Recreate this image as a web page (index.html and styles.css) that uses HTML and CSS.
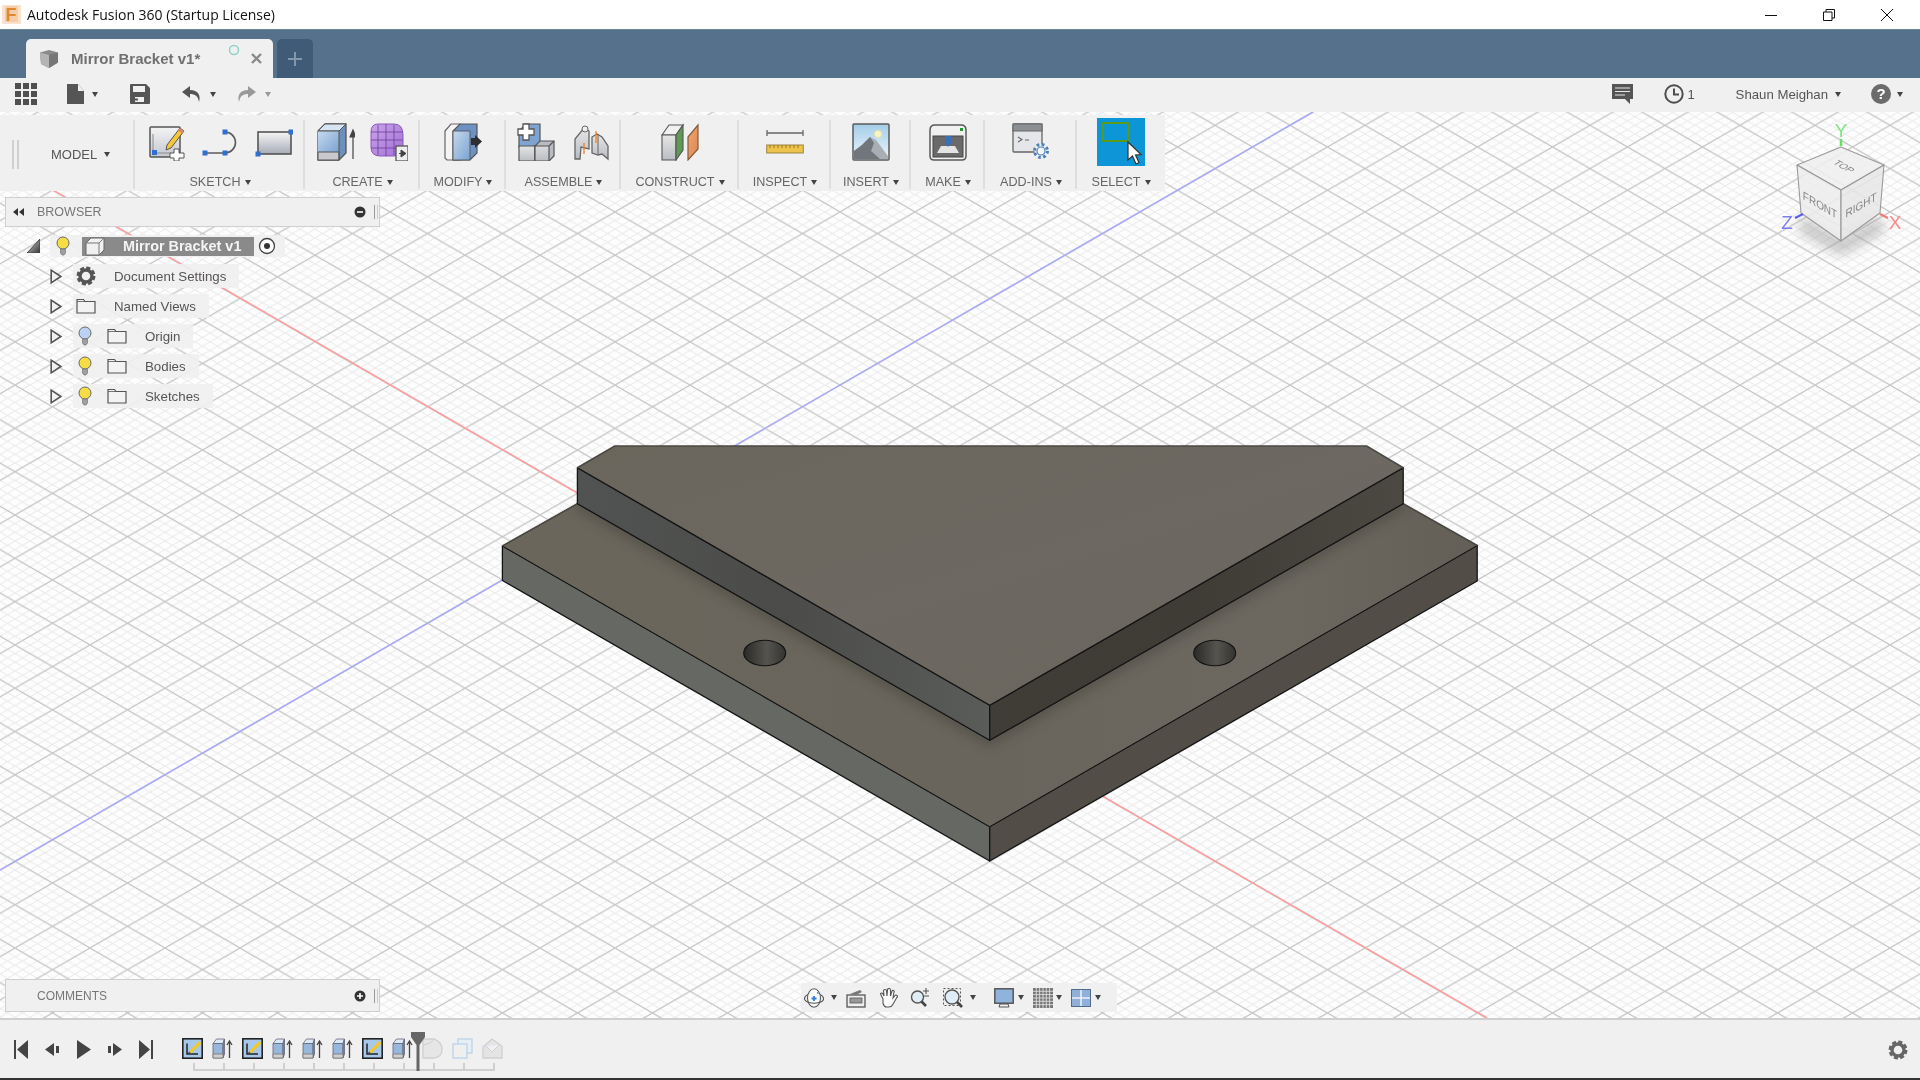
FILE: index.html
```html
<!DOCTYPE html>
<html lang="en">
<head>
<meta charset="utf-8">
<title>Autodesk Fusion 360 (Startup License)</title>
<link rel="stylesheet" href="styles.css">
</head>
<body>
<div class="app">
  <header class="titlebar">
    <svg class="app-logo" width="19" height="19" viewBox="0 0 19 19"><rect width="19" height="19" fill="#f9e3ce"/><rect x="3" y="1" width="13" height="16" rx="1" fill="#f5cda6"/><text x="3.500" y="15.500" class="logo-letter">F</text></svg>
    <span class="title-text">Autodesk Fusion 360 (Startup License)</span>
    <div class="win-controls">
      <span class="win-btn"><svg width="12" height="12" viewBox="0 0 12 12"><path d="M0 6.500H12" stroke="#111"/></svg></span>
      <span class="win-btn"><svg width="12" height="12" viewBox="0 0 12 12"><path d="M.5 3h8.500v8.500H.5zM3 3V.5h8.500V9H9" fill="none" stroke="#111"/></svg></span>
      <span class="win-btn"><svg width="12" height="12" viewBox="0 0 12 12"><path d="M0 0L12 12M12 0L0 12" stroke="#111"/></svg></span>
    </div>
  </header>

  <nav class="tabbar">
    <div class="tab">
      <svg width="20" height="20" viewBox="0 0 20 20"><path d="M1 3.500L10 1l9 2.500v10L10 19l-8-4z" fill="#8a8a8a"/><path d="M1 3.500L10 6v13l-8-4z" fill="#b4b4b4"/><path d="M10 6l9-2.500v10L10 19z" fill="#777"/></svg>
      <span class="tab-title">Mirror Bracket v1*</span>
      <svg class="tab-status" width="12" height="12" viewBox="0 0 12 12"><circle cx="6" cy="6" r="4.500" fill="none" stroke="#8fd3c6" stroke-width="1.500"/></svg>
      <svg class="tab-close" width="11" height="11" viewBox="0 0 11 11"><path d="M1 1L10 10M10 1L1 10" stroke="#8a8a8a" stroke-width="2.400"/></svg>
    </div>
    <div class="tab-new"><svg width="14" height="14" viewBox="0 0 14 14"><path d="M7 0V14M0 7H14" stroke="#8397ab" stroke-width="2"/></svg></div>
  </nav>

  <div class="quickbar">
    <svg width="22" height="22" viewBox="0 0 22 22" fill="#4f4f4f"><path d="M0 0h6v6H0zM8 0h6v6H8zM16 0h6v6h-6zM0 8h6v6H0zM8 8h6v6H8zM16 8h6v6h-6zM0 16h6v6H0zM8 16h6v6H8zM16 16h6v6h-6z"/></svg>
    <svg class="m30" width="18" height="20" viewBox="0 0 18 20"><path d="M0 0h11l6 7v13H0z" fill="#555"/><path d="M11 0v7h6" fill="#f0f0f0"/></svg>
    <i class="caret m7"></i>
    <svg class="m32" width="20" height="20" viewBox="0 0 20 20"><path d="M1 0h15l4 4v15a1 1 0 0 1-1 1H1a1 1 0 0 1-1-1V1a1 1 0 0 1 1-1z" fill="#555"/><rect x="3" y="2" width="12" height="6" fill="#f0f0f0"/><rect x="5" y="13" width="9" height="5" fill="#f0f0f0"/><rect x="5" y="14.500" width="3" height="2" fill="#555"/></svg>
    <svg class="m32" width="20" height="16" viewBox="0 0 20 16"><path d="M8 0L0 6l8 6V8c5 0 8 2 9 8 2-7-1-12-9-12z" fill="#555"/></svg>
    <i class="caret m8"></i>
    <svg class="m20" width="20" height="16" viewBox="0 0 20 16"><path d="M12 0l8 6-8 6V8c-5 0-8 2-9 8C1 9 4 4 12 4z" fill="#999"/></svg>
    <i class="caret caret-light m9"></i>
    <div class="qb-right">
      <svg width="21" height="20" viewBox="0 0 21 20"><path d="M0 0h21v15h-3v5l-5-5H0z" fill="#555"/><path d="M3 4h15M3 7.500h15M3 11h10" stroke="#e8e8e8" stroke-width="1.200"/></svg>
      <svg class="m31" width="20" height="20" viewBox="0 0 20 20"><circle cx="10" cy="10" r="8.700" fill="none" stroke="#4d4d4d" stroke-width="2"/><path d="M10 4.500V10.500H15" fill="none" stroke="#4d4d4d" stroke-width="2"/></svg>
      <span class="qb-text m3 qb-count">1</span>
      <span class="qb-text user">Shaun Meighan</span>
      <i class="caret m7"></i>
      <svg class="m30" width="20" height="20" viewBox="0 0 20 20"><circle cx="10" cy="10" r="10" fill="#6b6b6b"/><text x="10" y="15" class="help-mark">?</text></svg>
      <i class="caret m6"></i>
    </div>
  </div>

  <main class="viewport">
    <svg class="scene" width="1920" height="906" viewBox="0 112 1920 906">
      <defs>
        <pattern id="grid-minor" patternUnits="userSpaceOnUse" x="615" y="515" width="15" height="8.660">
          <path d="M0 0L15 8.660M0 8.660L15 0" stroke="#e9e9e9" stroke-width="1" fill="none"/>
        </pattern>
        <pattern id="grid-major" patternUnits="userSpaceOnUse" x="615" y="515" width="75" height="43.300">
          <path d="M0 0L75 43.300M0 43.300L75 0" stroke="#c6c6c6" stroke-width="1.100" fill="none"/>
        </pattern>
        <linearGradient id="f-top" x1="0" y1="0" x2="1" y2="1"><stop offset="0" stop-color="#6a665c"/><stop offset=".5" stop-color="#6d6962"/><stop offset="1" stop-color="#69655c"/></linearGradient>
        <linearGradient id="f-base" x1="0" y1="0" x2="1" y2="0"><stop offset="0" stop-color="#6a665c"/><stop offset=".5" stop-color="#69655c"/><stop offset=".8" stop-color="#6c6860"/><stop offset="1" stop-color="#645f56"/></linearGradient>
        <linearGradient id="f-step-l" x1="0" y1="0" x2="1" y2="0"><stop offset="0" stop-color="#515352"/><stop offset=".5" stop-color="#4b4c4a"/><stop offset="1" stop-color="#5a5c5a"/></linearGradient>
        <linearGradient id="f-step-r" x1="0" y1="0" x2="1" y2="0"><stop offset="0" stop-color="#403d37"/><stop offset=".5" stop-color="#3f3c36"/><stop offset="1" stop-color="#4c4942"/></linearGradient>
        <linearGradient id="f-hole" x1="0" y1="0" x2="1" y2="0"><stop offset="0" stop-color="#2a2a28"/><stop offset=".55" stop-color="#55544f"/><stop offset="1" stop-color="#333331"/></linearGradient>
        <linearGradient id="i-paper" x1="0" y1="0" x2="0" y2="1"><stop offset="0" stop-color="#f4f4f4"/><stop offset="1" stop-color="#c3c7cf"/></linearGradient>
        <linearGradient id="i-rect" x1="0" y1="0" x2="0" y2="1"><stop offset="0" stop-color="#f6f6f6"/><stop offset="1" stop-color="#a6abb8"/></linearGradient>
        <linearGradient id="i-blue" x1="0" y1="0" x2="1" y2="1"><stop offset="0" stop-color="#c6d9ee"/><stop offset="1" stop-color="#7ba3d2"/></linearGradient>
        <linearGradient id="i-grey" x1="0" y1="0" x2="0" y2="1"><stop offset="0" stop-color="#e6e6e6"/><stop offset="1" stop-color="#b9bcc2"/></linearGradient>
        <linearGradient id="i-purple" x1="0" y1="0" x2="1" y2="1"><stop offset="0" stop-color="#c9a4ea"/><stop offset="1" stop-color="#a271d6"/></linearGradient>
        <linearGradient id="i-sky" x1="0" y1="0" x2="0" y2="1"><stop offset="0" stop-color="#a3cde8"/><stop offset="1" stop-color="#eef6fb"/></linearGradient>
        <linearGradient id="i-orange" x1="0" y1="0" x2="1" y2="1"><stop offset="0" stop-color="#f0a873"/><stop offset="1" stop-color="#dc8450"/></linearGradient>
        <linearGradient id="root-tri" x1="0" y1="0" x2="1" y2="1"><stop offset="0" stop-color="#ddd"/><stop offset="1" stop-color="#333"/></linearGradient>
        <filter id="soft"><feGaussianBlur stdDeviation="6"/></filter>
        <filter id="soft-cube"><feGaussianBlur stdDeviation="6"/></filter>
        <clipPath id="base-clip"><polygon points="501.700,545 576.700,502.700 989,739.300 1402.500,502.700 1476.500,544.500 989,825.700"/></clipPath>

        <symbol id="bulb" viewBox="0 0 16 20"><circle cx="8" cy="7" r="6" fill="currentColor" stroke="#6a6a6a"/><path d="M5.500 13h5v4l-1.500 2h-2l-1.500-2z" fill="#a0a0a0" stroke="#777" stroke-width=".7"/></symbol>
        <symbol id="folder" viewBox="0 0 20 16"><path d="M1 15V1.500h6.500L9 3.500h10V15z" fill="#f3f3f3" stroke="#555" stroke-width="1.200"/><path d="M1 3.500h8" stroke="#555" stroke-width=".8"/></symbol>
        <symbol id="twist" viewBox="0 0 12 15"><path d="M1.200 1.200L10.800 7.500 1.200 13.800z" fill="#f2f2f2" stroke="#555" stroke-width="1.600"/></symbol>
        <symbol id="tl-sketch" viewBox="0 0 21 21"><rect x=".8" y=".8" width="19.400" height="19.400" fill="#a7c8ea" stroke="#222" stroke-width="1.600"/><path d="M5 5.500V16H16" fill="none" stroke="#222" stroke-width="1.500"/><path d="M7 13.500L17 3l2.500 2.200L9 15.500z" fill="#f4c924"/><path d="M7 13.500L9 15.500 5.500 16.500z" fill="#444"/></symbol>
        <symbol id="tl-extrude" viewBox="0 0 21 21"><path d="M1 5.500L4.500 1h8l-1.500 4.500z" fill="#dbe8f5" stroke="#667" stroke-width=".8"/><path d="M1 5.500h10V20H1z" fill="#97b7dc" stroke="#667" stroke-width=".8"/><path d="M11 5.500L12.500 1v15L11 20z" fill="#6f8fb8" stroke="#667" stroke-width=".8"/><path d="M1 16h10v4H1z" fill="#cfcfcf" stroke="#777" stroke-width=".8"/><path d="M17.500 20V4M15 7l2.500-4L20 7" fill="none" stroke="#444" stroke-width="1.300"/></symbol>
      </defs>

      <rect x="0" y="112" width="1920" height="906" fill="#fdfdfd"/>
      <rect x="0" y="112" width="1920" height="906" fill="url(#grid-minor)"/>
      <rect x="0" y="112" width="1920" height="906" fill="url(#grid-major)"/>
      <path d="M0 159.500L1487 1018" stroke="#ff9c9c" stroke-width="1.500"/>
      <path d="M0 870L1313 112" stroke="#a9a9fb" stroke-width="1.500"/>

      <!-- model -->
      <g class="model">
        <g stroke="#141414" stroke-width="1.300" stroke-linejoin="round">
          <polygon points="501.700,545 989,825.700 989,860 501.700,579.500" fill="#666864"/>
          <polygon points="1476.500,544.500 989,825.700 989,860 1476.500,580" fill="#524e47"/>
          <polygon points="501.700,545 576.700,502.700 989,739.300 1402.500,502.700 1476.500,544.500 989,825.700" fill="url(#f-base)" stroke-width="1"/>
        </g>
        <g clip-path="url(#base-clip)"><path d="M576.700 502.700L989 739.300 1402.500 502.700" fill="none" stroke="#3c3a34" stroke-width="10" filter="url(#soft)" opacity=".5"/></g>
        <path d="M501.700 545L576.700 502.700M1402.500 502.700L1476.500 544.500" stroke="#4c4a44" stroke-width="1.500" fill="none"/>
        <g stroke="#141414" stroke-width="1.300" stroke-linejoin="round">
          <polygon points="576.700,466.700 989,704.300 989,739.300 576.700,502.700" fill="url(#f-step-l)"/>
          <polygon points="1402.500,466.700 989,704.300 989,739.300 1402.500,502.700" fill="url(#f-step-r)"/>
          <polygon points="576.700,466.700 989,704.300 1402.500,466.700 1366,445 614,445" fill="url(#f-top)" stroke="none"/>
          <path d="M576.700 466.700L989 704.300 1402.500 466.700" fill="none"/>
        </g>
        <path d="M576.700 466.700L614 445H1366L1402.500 466.700" fill="none" stroke="#4a4843" stroke-width="1.600"/>
        <ellipse cx="764" cy="652" rx="21" ry="12.800" fill="url(#f-hole)" stroke="#121212" stroke-width="1.100"/>
        <ellipse cx="1214" cy="652" rx="21" ry="12.800" fill="url(#f-hole)" stroke="#121212" stroke-width="1.100"/>
      </g>

      <!-- view cube -->
      <polygon points="1803,215 1841,238 1880,215 1885,232 1841,256 1798,232" fill="#999" opacity=".5" filter="url(#soft-cube)"/>
      <g stroke="#9a9a9a" stroke-width="1.100" stroke-linejoin="round">
        <polygon points="1841,147 1884,165 1841,190 1797,165" fill="#eeeeee" fill-opacity=".85"/>
        <polygon points="1797,165 1841,190 1841,241 1801,213" fill="#ececec" fill-opacity=".85"/>
        <polygon points="1884,165 1841,190 1841,241 1880,213" fill="#e6e6e6" fill-opacity=".85"/>
      </g>
      <text class="cube-face" transform="translate(1841 168) matrix(.75 .42 -.75 .42 0 0)" text-anchor="middle">TOP</text>
      <text class="cube-face" transform="translate(1820 209) matrix(.866 .5 0 1 0 0)" text-anchor="middle">FRONT</text>
      <text class="cube-face" transform="translate(1861 209) matrix(.866 -.5 0 1 0 0)" text-anchor="middle">RIGHT</text>
      <path d="M1841 139V146" stroke="#62e262" stroke-width="2.500"/>
      <path d="M1795 218L1803 214" stroke="#5a5af0" stroke-width="2"/>
      <path d="M1880 214L1888 218" stroke="#f07a7a" stroke-width="2"/>
      <text class="axis axis-y" x="1841" y="137" text-anchor="middle">Y</text>
      <text class="axis axis-z" x="1787" y="229" text-anchor="middle">Z</text>
      <text class="axis axis-x" x="1895" y="229" text-anchor="middle">X</text>
    </svg>

    <section class="toolbar">
      <div class="group group-model">
        <span class="grip"></span>
        <span class="tool-label model-label">MODEL<i class="caret"></i></span>
      </div>

      <div class="group">
        <div class="icons gap-16">
          <svg class="ti" viewBox="0 0 38 38"><rect x="3" y="4" width="30" height="30" rx="1" fill="url(#i-paper)" stroke="#555" stroke-width="1.500"/><path d="M6 11V30H24" fill="none" stroke="#8a8a8a"/><rect x="5" y="27" width="5" height="5" fill="#2f6fd0"/><path d="M20 22L33 5l4 3-13 17-5 2z" fill="#f5c63a" stroke="#555"/><path d="M31 7.500l2-2.500 4 3-2 2.500z" fill="#d98a6a"/><path d="M27 26h5v4h5v5h-5v3h-5v-3h-4v-5h4z" fill="#fff" stroke="#555"/></svg>
          <svg class="ti" viewBox="0 0 38 38"><path d="M4 30H24M24 9A10.500 10.500 0 0 1 24 30" fill="none" stroke="#5b5b5b" stroke-width="1.600"/><rect x="1.500" y="27.500" width="5" height="5" fill="#2f6fd0"/><rect x="21.500" y="27.500" width="5" height="5" fill="#2f6fd0"/><rect x="21.500" y="6.500" width="5" height="5" fill="#2f6fd0"/></svg>
          <svg class="ti" viewBox="0 0 38 38"><rect x="3" y="9" width="33" height="22" fill="url(#i-rect)" stroke="#555" stroke-width="1.600"/><rect x="33.500" y="6.500" width="5" height="5" fill="#2f6fd0"/><rect x="0.500" y="28.500" width="5" height="5" fill="#2f6fd0"/></svg>
        </div>
        <span class="tool-label">SKETCH<i class="caret"></i></span>
      </div>

      <div class="group">
        <div class="icons gap-15">
          <svg class="ti" viewBox="0 0 38 38"><path d="M1 8L8 1H29V30L22 37H1z" fill="#6d8fbb" stroke="#555" stroke-width="1.300"/><path d="M1 8L8 1H29L22 8z" fill="#d6e4f3" stroke="#555" stroke-width="1"/><path d="M1 8H22V29H1z" fill="url(#i-blue)"/><path d="M1 29H22V37H1z" fill="#c9c9cd" stroke="#555" stroke-width="1"/><path d="M1 8H22V37M22 8L29 1" fill="none" stroke="#555"/><path d="M36 36V9M33 14l3-7 3 7z" fill="#444" stroke="#444" stroke-width="1.200"/></svg>
          <svg class="ti" viewBox="0 0 38 38"><path d="M8 1H24Q33 1 33 12V24Q33 33 24 33H10Q1 33 1 24V9Q1 1 8 1z" fill="url(#i-purple)" stroke="#8a58b8"/><path d="M8 2V32M16 1V33M24 2V32M1 9H33M1 17H33M1 25H33" stroke="#6d3e98" stroke-width=".8"/><rect x="26" y="23" width="12" height="15" fill="#eee" stroke="#555" stroke-width="1.300"/><path d="M29 30.500H33M31 27l5 3.500-5 3.500z" fill="#444" stroke="#444"/></svg>
        </div>
        <span class="tool-label">CREATE<i class="caret"></i></span>
      </div>

      <div class="group">
        <div class="icons">
          <svg class="ti" viewBox="0 0 38 38"><path d="M1 8L7 1H16V37H3L1 35z" fill="#f4f4f4" stroke="#666" stroke-width="1.200"/><path d="M9 8L16 1H33V30L26 37H9z" fill="#6d91c2" stroke="#555" stroke-width="1.200"/><path d="M9 8H26V37H9z" fill="url(#i-blue)" stroke="#555" stroke-width=".9"/><path d="M27 15h4v-3l7 6.500-7 6.500v-3h-4z" fill="#2e2e2e"/></svg>
        </div>
        <span class="tool-label">MODIFY<i class="caret"></i></span>
      </div>

      <div class="group">
        <div class="icons gap-17">
          <svg class="ti" viewBox="0 0 38 38"><path d="M2 24V8L9 1h14v22z" fill="#7ea5d2" stroke="#555" stroke-width="1.200"/><path d="M2 23h16v15H2z" fill="url(#i-grey)" stroke="#555" stroke-width="1.200"/><path d="M18 23l5-5h14v15l-5 5H18z" fill="#b8bbc1" stroke="#555" stroke-width="1.200"/><path d="M18 23h14v15H18zM32 23l5-5" fill="url(#i-grey)" stroke="#555" stroke-width="1.200"/><path d="M6 1h6v5h5v6h-5v5H6v-5H1V6h5z" fill="#fff" stroke="#555" stroke-width="1.300"/></svg>
          <svg class="ti" viewBox="0 0 38 38"><path d="M3 36V16L12 5l5 3v18L9 24l-1 12z" fill="url(#i-grey)" stroke="#666" stroke-width="1.300"/><circle cx="13" cy="6" r="3" fill="#eee" stroke="#666"/><path d="M20 30V14l5-3 5 3 6 9v13l-6-5-4 1z" fill="url(#i-grey)" stroke="#666" stroke-width="1.300"/><path d="M26 11V32" stroke="#666"/><path d="M24 8V20M12 20V31" stroke="#ee7d22" stroke-width="1.300"/></svg>
        </div>
        <span class="tool-label">ASSEMBLE<i class="caret"></i></span>
      </div>

      <div class="group">
        <div class="icons">
          <svg class="ti" viewBox="0 0 38 38"><path d="M1 12L8 2H22L15 12z" fill="#f1f1f1" stroke="#555" stroke-width="1.100"/><path d="M1 12H15V37H1z" fill="url(#i-grey)" stroke="#555" stroke-width="1.100"/><path d="M15 12L22 2V27L15 37z" fill="#5e9a52" stroke="#555" stroke-width="1.100"/><path d="M27 14L37 2V26L27 37z" fill="url(#i-orange)" stroke="#8a5a3a" stroke-width="1.200"/></svg>
        </div>
        <span class="tool-label">CONSTRUCT<i class="caret"></i></span>
      </div>

      <div class="group">
        <div class="icons">
          <svg class="ti" viewBox="0 0 38 38"><path d="M.5 10H37.500M1 7V13M37 7V13" fill="none" stroke="#666" stroke-width="1.300"/><rect x=".7" y="22" width="36.600" height="8" fill="#eec34b" stroke="#9a8444"/><path d="M4 22v3M8 22v3M12 22v3M16 22v3M20 22v3M24 22v3M28 22v3M32 22v3" stroke="#9a7a20"/></svg>
        </div>
        <span class="tool-label">INSPECT<i class="caret"></i></span>
      </div>

      <div class="group">
        <div class="icons">
          <svg class="ti" viewBox="0 0 38 38"><rect x="1" y="1" width="36" height="36" rx="1" fill="url(#i-sky)" stroke="#5a5a5a" stroke-width="1.500"/><circle cx="26" cy="11" r="3.500" fill="#fbf3c8" stroke="#f2e3a0"/><path d="M2 36V28L10 22 18 14 24 17 36 33V36z" fill="#a9aeb4"/><path d="M2 36V28L10 22 18 14 22 20 19 28 28 36z" fill="#70767c"/></svg>
        </div>
        <span class="tool-label">INSERT<i class="caret"></i></span>
      </div>

      <div class="group">
        <div class="icons">
          <svg class="ti" viewBox="0 0 38 38"><path d="M1 7Q1 2 6 2H32Q37 2 37 7V33Q37 37 33 37H5Q1 37 1 33z" fill="#f0f0f0" stroke="#5a5a5a" stroke-width="1.500"/><rect x="4" y="13" width="30" height="21" fill="#6a6a6a" stroke="#444"/><path d="M8 30L12 23H26L30 30z" fill="#e4e4e4"/><path d="M16 13h6v7l-3 4-3-4z" fill="#3a6fbe"/><rect x="31" y="5" width="3" height="3" fill="#1d9a2d"/></svg>
        </div>
        <span class="tool-label">MAKE<i class="caret"></i></span>
      </div>

      <div class="group">
        <div class="icons">
          <svg class="ti" viewBox="0 0 38 38"><rect x="1" y="1" width="29" height="28" rx="1" fill="#e4e6ea" stroke="#666" stroke-width="1.300"/><rect x="1" y="1" width="29" height="7" fill="#8c8f94" stroke="#666"/><path d="M6 14l4 2.500-4 2.500M13 17h4" fill="none" stroke="#666" stroke-width="1.100"/><circle cx="29" cy="28" r="6.500" fill="#f0f4fa" stroke="#4e7fb8" stroke-width="3" stroke-dasharray="2.600 2.500"/><circle cx="29" cy="28" r="4" fill="#f3f6fb" stroke="#4e7fb8" stroke-width="1.200"/></svg>
        </div>
        <span class="tool-label">ADD-INS<i class="caret"></i></span>
      </div>

      <div class="group group-last">
        <div class="icons">
          <svg class="select-tile" viewBox="0 0 48 48"><rect width="48" height="48" fill="#0c96d8"/><rect x="6" y="5" width="25.500" height="18" fill="none" stroke="#5a9a1e" stroke-width="2"/><path d="M31 24V42L35.500 38 39 46 42 44.500 38.500 37 44 36.500z" fill="#fff" stroke="#333" stroke-width="1.200"/></svg>
        </div>
        <span class="tool-label">SELECT<i class="caret"></i></span>
      </div>
    </section>

    <section class="panel browser">
      <svg width="11" height="8" viewBox="0 0 11 8"><path d="M5 0v8L0 4zM11 0v8L6 4z" fill="#333"/></svg>
      <span class="panel-title browser-title">BROWSER</span>
      <svg class="panel-btn" width="12" height="12" viewBox="0 0 12 12"><circle cx="6" cy="6" r="5.500" fill="#333"/><path d="M3 6H9" stroke="#fff" stroke-width="1.600"/></svg>
      <span class="panel-grip"></span>
    </section>

    <div class="tree">
      <div class="row">
        <svg class="root-tri" width="13" height="14" viewBox="0 0 13 14"><path d="M13 0V14H0z" fill="url(#root-tri)" stroke="#444"/></svg>
        <div class="chip chip-root">
          <svg class="bulb-y" width="16" height="20"><use href="#bulb"/></svg>
          <div class="sel">
            <svg width="20" height="19" viewBox="0 0 20 19"><path d="M1 6L6 1H19V13L14 18H1z" fill="#f0f0f0" stroke="#666"/><path d="M1 6H14V18M14 6L19 1" fill="none" stroke="#777"/></svg>
            <span class="sel-text">Mirror Bracket v1</span>
          </div>
          <svg class="radio" width="18" height="18" viewBox="0 0 18 18"><circle cx="9" cy="9" r="7.500" fill="#fff" stroke="#444" stroke-width="1.300"/><circle cx="9" cy="9" r="3" fill="#333"/></svg>
        </div>
      </div>
      <div class="row">
        <svg class="twist" width="12" height="15"><use href="#twist"/></svg>
        <div class="chip">
          <svg width="20" height="20" viewBox="0 0 20 20"><circle cx="10" cy="10" r="7.500" fill="none" stroke="#555" stroke-width="4" stroke-dasharray="3.800 2.090"/><circle cx="10" cy="10" r="6" fill="none" stroke="#555" stroke-width="3.400"/></svg>
          <span class="item">Document Settings</span>
        </div>
      </div>
      <div class="row">
        <svg class="twist" width="12" height="15"><use href="#twist"/></svg>
        <div class="chip">
          <svg width="20" height="16"><use href="#folder"/></svg>
          <span class="item">Named Views</span>
        </div>
      </div>
      <div class="row">
        <svg class="twist" width="12" height="15"><use href="#twist"/></svg>
        <div class="chip chip-bulb">
          <svg class="bulb-b" width="16" height="20"><use href="#bulb"/></svg>
          <svg class="folder-after" width="20" height="16"><use href="#folder"/></svg>
          <span class="item">Origin</span>
        </div>
      </div>
      <div class="row">
        <svg class="twist" width="12" height="15"><use href="#twist"/></svg>
        <div class="chip chip-bulb">
          <svg class="bulb-y" width="16" height="20"><use href="#bulb"/></svg>
          <svg class="folder-after" width="20" height="16"><use href="#folder"/></svg>
          <span class="item">Bodies</span>
        </div>
      </div>
      <div class="row">
        <svg class="twist" width="12" height="15"><use href="#twist"/></svg>
        <div class="chip chip-bulb">
          <svg class="bulb-y" width="16" height="20"><use href="#bulb"/></svg>
          <svg class="folder-after" width="20" height="16"><use href="#folder"/></svg>
          <span class="item">Sketches</span>
        </div>
      </div>
    </div>

    <section class="panel comments">
      <span class="panel-title comments-title">COMMENTS</span>
      <svg class="panel-btn" width="12" height="12" viewBox="0 0 12 12"><circle cx="6" cy="6" r="5.500" fill="#333"/><path d="M3 6H9M6 3V9" stroke="#fff" stroke-width="1.600"/></svg>
      <span class="panel-grip"></span>
    </section>

    <section class="navbar">
      <svg width="20" height="20" viewBox="0 0 20 20"><ellipse cx="10" cy="10" rx="6.500" ry="9.200" fill="#fafafa" stroke="#555" stroke-width="1.100"/><path d="M4 6.500Q.5 8 .5 10.500T5 14.500Q10 16 15 14.500T19.500 10.500Q19.500 8 16 6.500" fill="none" stroke="#555" stroke-width="1.100"/><path d="M10 8v5M7.500 10.500h5" stroke="#2f7fe0" stroke-width="1.800"/><path d="M13 4.500l1.500 1" stroke="#2f7fe0" stroke-width="1.200"/></svg>
      <i class="caret m7"></i>
      <svg class="m9" width="20" height="20" viewBox="0 0 20 20"><rect x="1" y="7" width="18" height="12" fill="#eee" stroke="#555" stroke-width="1.300"/><rect x="4" y="10" width="12" height="5" fill="#999" stroke="#555" stroke-width=".8"/><path d="M4 6L14 2l2 2-6 3z" fill="#777"/></svg>
      <svg class="m12" width="20" height="20" viewBox="0 0 20 20"><path d="M5 11L3 7Q2 5 3.500 5T6 8L5.500 3Q5.500 1.500 7 1.500T8.500 3L9 8 9.500 1.500Q9.500 .5 11 .5T12.500 2L12.500 8 14 3Q14.500 2 15.500 2.500T16 4L15 10 17 7.500Q18 6.500 19 7.500T18.500 10L14.500 17Q13.500 19 11 19H8.500Q6 19 5 15z" fill="#fafafa" stroke="#555" stroke-width="1.100"/></svg>
      <svg class="m12" width="20" height="20" viewBox="0 0 20 20"><circle cx="7.500" cy="9" r="6" fill="#dfeef6" stroke="#555" stroke-width="1.400"/><path d="M11.500 13.500L16 18" stroke="#444" stroke-width="2.600"/><path d="M13 3h6M16 0v6M13 8h6" stroke="#555" stroke-width="1.100"/></svg>
      <svg class="m13" width="20" height="20" viewBox="0 0 20 20"><rect x=".5" y=".5" width="17" height="17" fill="none" stroke="#555" stroke-dasharray="2 2"/><circle cx="9" cy="9" r="7" fill="#dfeef6" stroke="#555" stroke-width="1.400"/><path d="M14 14L19 19" stroke="#444" stroke-width="2.600"/></svg>
      <i class="caret m7"></i>
      <svg class="m18" width="20" height="20" viewBox="0 0 20 20"><rect x=".8" y=".8" width="18.400" height="14.400" fill="#8fb3dc" stroke="#555" stroke-width="1.500"/><path d="M6 16h8l1 3H5z" fill="#eee" stroke="#555"/></svg>
      <i class="caret m4"></i>
      <svg class="m9" width="20" height="20" viewBox="0 0 20 20"><rect width="20" height="20" fill="#777"/><path d="M3.300 0V20M6.600 0V20M10 0V20M13.300 0V20M16.600 0V20M0 3.300H20M0 6.600H20M0 10H20M0 13.300H20M0 16.600H20" stroke="#dcdcdc" stroke-width=".9"/></svg>
      <i class="caret m3"></i>
      <svg class="m9" width="20" height="20" viewBox="0 0 20 20"><rect x=".5" y="1.500" width="19" height="17" fill="#8fb0d8" stroke="#4f6b8e"/><path d="M10 2V18M1 10H19" stroke="#eef" stroke-width="1.600"/></svg>
      <i class="caret m4"></i>
    </section>
  </main>

  <footer class="timeline">
    <div class="tl-controls">
      <svg width="16" height="19" viewBox="0 0 16 19"><path d="M1 0h2v19H1zM15 0v19L4 9.500z" fill="#444"/></svg>
      <svg width="16" height="19" viewBox="0 0 16 19"><path d="M10 3v13L1 9.500zM12 6h3v7h-3z" fill="#444"/></svg>
      <svg width="16" height="19" viewBox="0 0 16 19"><path d="M1 0v19l14-9.500z" fill="#444"/></svg>
      <svg width="16" height="19" viewBox="0 0 16 19"><path d="M6 3v13l9-6.500zM1 6h3v7H1z" fill="#444"/></svg>
      <svg width="16" height="19" viewBox="0 0 16 19"><path d="M13 0h2v19h-2zM1 0v19l11-9.500z" fill="#444"/></svg>
    </div>
    <div class="tl-track">
      <div class="tl-items">
        <svg width="21" height="21"><use href="#tl-sketch"/></svg>
        <svg width="21" height="21"><use href="#tl-extrude"/></svg>
        <svg width="21" height="21"><use href="#tl-sketch"/></svg>
        <svg width="21" height="21"><use href="#tl-extrude"/></svg>
        <svg width="21" height="21"><use href="#tl-extrude"/></svg>
        <svg width="21" height="21"><use href="#tl-extrude"/></svg>
        <svg width="21" height="21"><use href="#tl-sketch"/></svg>
        <svg width="21" height="21"><use href="#tl-extrude"/></svg>
        <svg width="21" height="21" viewBox="0 0 21 21"><path d="M1 1h11q8 3 8 10 0 9-9 9H1z" fill="#e6e6e6" stroke="#cfcfcf" stroke-width="1.300"/><path d="M1 7q8-1 11-6" fill="none" stroke="#cfcfcf"/></svg>
        <svg width="21" height="21" viewBox="0 0 21 21"><rect x="6" y="1" width="14" height="14" fill="#e6eef6" stroke="#bcd3ea" stroke-width="1.300"/><rect x="1" y="6" width="14" height="14" fill="#efefef" stroke="#bcd3ea" stroke-width="1.300"/></svg>
        <svg width="21" height="21" viewBox="0 0 21 21"><path d="M1 9L10 1l10 7v12H1z" fill="#e4e4e4" stroke="#cfcfcf" stroke-width="1.300"/><path d="M4 8l6 6 7-7" fill="#eef2f6" stroke="#d0d0d0"/></svg>
      </div>
      <div class="tl-bracket"></div>
      <svg class="tl-marker" width="16" height="39" viewBox="0 0 16 39"><path d="M1 0h14v5L9.500 13V39h-3V13L1 5z" fill="#666"/></svg>
    </div>
    <svg class="tl-gear" width="20" height="20" viewBox="0 0 20 20"><circle cx="10" cy="10" r="7.500" fill="none" stroke="#666" stroke-width="4" stroke-dasharray="3.800 2.090"/><circle cx="10" cy="10" r="6" fill="none" stroke="#666" stroke-width="3.400"/></svg>
  </footer>
</div>
</body>
</html>
```
FILE: styles.css
```css
* { box-sizing: border-box; }
html, body { margin: 0; padding: 0; height: 100%; }
body { font-family: "Liberation Sans", Arial, sans-serif; background: #fff; overflow: hidden; }
svg { display: block; flex: none; }

/* the source capture is slightly soft all over */
.app { width: 1920px; height: 1080px; display: flex; flex-direction: column; filter: blur(.4px); }

/* title bar */
.titlebar { height: 29px; flex: none; background: #fff; display: flex; align-items: center; padding-left: 2px; }
.logo-letter { font: bold 18px "Liberation Sans", sans-serif; fill: #e08a30; }
.title-text { margin-left: 6px; font: 14px "Open Sans", sans-serif; color: #111; }
.win-controls { margin-left: auto; display: flex; padding-right: 4px; }
.win-btn { width: 58px; height: 29px; display: flex; align-items: center; justify-content: center; }

/* tabs */
.tabbar { height: 49px; flex: none; background: #55718c; border-top: 1px solid #6d869e; display: flex; align-items: flex-end; padding-left: 26px; gap: 4px; }
.tab { position: relative; width: 247px; height: 39px; background: #f0f0f0; border-radius: 5px 5px 0 0; display: flex; align-items: center; padding: 0 11px 0 13px; }
.tab-title { margin-left: 12px; font: bold 15px "Liberation Sans", sans-serif; color: #707070; }
.tab-status { position: absolute; left: 202px; top: 5px; }
.tab-close { margin-left: auto; }
.tab-new { width: 36px; height: 39px; background: #3f5b77; border-radius: 5px 5px 0 0; display: flex; align-items: center; justify-content: center; }

/* quick access */
.quickbar { height: 34px; flex: none; background: #f0f0f0; display: flex; align-items: center; padding: 0 0 2px 15px; }
.qb-right { margin-left: auto; display: flex; align-items: center; padding-right: 17px; }
.qb-text { font-size: 13px; color: #555; }
.qb-count { margin-right: 41px; }
.user { font-size: 13.200px; }
.caret { display: inline-block; flex: none; width: 0; height: 0; border-style: solid; border-width: 5px 3.500px 0; border-color: #444 transparent transparent; }
.caret-light { border-top-color: #999; }
.m3 { margin-left: 3px; } .m4 { margin-left: 4px; } .m5 { margin-left: 5px; } .m6 { margin-left: 6px; }
.m7 { margin-left: 7px; } .m8 { margin-left: 8px; } .m9 { margin-left: 9px; } .m12 { margin-left: 12px; }
.m13 { margin-left: 13px; } .m18 { margin-left: 18px; } .m20 { margin-left: 20px; } .m30 { margin-left: 30px; } .m31 { margin-left: 31px; } .m32 { margin-left: 32px; }
.help-mark { font: bold 15px "Liberation Sans", sans-serif; fill: #fff; text-anchor: middle; }

/* viewport */
.viewport { position: relative; flex: 1; min-height: 0; overflow: hidden; }
.scene { position: absolute; left: 0; top: 0; }
.model { transform: translate(.7px, 1px); }
.cube-face { font: 11.500px "Liberation Sans", sans-serif; fill: #858585; }
.axis { font: 19px "Liberation Sans", sans-serif; }
.axis-y { fill: #7fe67f; }
.axis-z { fill: #7c7cf8; }
.axis-x { fill: #fb8b8b; }

/* toolbar */
.toolbar { position: absolute; left: 0; top: 3px; width: 1165px; height: 76px; background: #f0f0f0; display: grid; grid-template-columns: 135px 170px 115px 86px 115px 118px 92px 80px 74px 92px 88px; }
.group { margin: 5px 0 2px; box-shadow: inset -2px 0 #dedede; display: flex; flex-direction: column; align-items: center; }
.group-last { box-shadow: none; }
.group-model { flex-direction: row; align-items: center; padding-left: 12px; }
.grip { width: 7px; height: 29px; border-left: 2px solid #d0d0d0; border-right: 2px solid #d0d0d0; }
.icons { height: 44px; display: flex; align-items: center; justify-content: center; }
.gap-15 { gap: 15px; } .gap-16 { gap: 16px; } .gap-17 { gap: 17px; }
.ti { width: 38px; height: 38px; }
.select-tile { width: 48px; height: 48px; }
.tool-label { margin-top: auto; height: 13px; line-height: 13px; font-size: 12.600px; color: #666; display: inline-flex; align-items: center; gap: 4px; white-space: nowrap; }
.model-label { margin: 0 0 0 32px; color: #555; font-size: 13px; gap: 7px; }

/* panels */
.panel { position: absolute; left: 5px; width: 375px; background: #f0f0f0; border: 1px solid #cfcfcf; display: flex; align-items: center; }
.browser { top: 85px; height: 30px; padding-left: 7px; }
.comments { bottom: 6px; height: 33px; }
.panel-title { font-size: 12.500px; color: #777; }
.browser-title { margin-left: 13px; }
.comments-title { margin-left: 31px; font-size: 12px; }
.panel-btn { margin-left: auto; }
.panel-grip { width: 4px; height: 14px; margin: 0 1px 0 8px; border-left: 1px solid #999; border-right: 1px solid #ccc; }

/* tree */
.tree { position: absolute; left: 0; top: 119px; }
.row { height: 30px; display: flex; align-items: center; }
.root-tri { margin-left: 27px; }
.twist { margin-left: 50px; }
.chip { margin-left: 11px; height: 24px; padding: 0 13px 0 3px; background: rgba(240, 240, 240, .9); display: flex; align-items: center; }
.chip-bulb { padding-left: 4px; }
.chip-root { margin-left: 10px; padding: 0 9px 0 5px; height: 22px; }
.sel { margin-left: 11px; width: 172px; height: 19px; background: #8a8a8a; display: flex; align-items: center; padding-left: 3px; }
.sel-text { margin-left: 18px; font: bold 14.400px "Liberation Sans", sans-serif; color: #f4f4f4; white-space: nowrap; }
.radio { margin-left: 4px; }
.item { margin-left: 18px; font-size: 13.300px; color: #555; white-space: nowrap; }
.folder-after { margin-left: 14px; }
.bulb-y { color: #f6dc45; }
.bulb-b { color: #bcd2f5; }

/* nav bar */
.navbar { position: absolute; left: 801px; top: 871px; width: 316px; height: 29px; background: #f0f0f0; display: flex; align-items: center; padding-left: 3px; }

/* timeline */
.timeline { height: 62px; flex: none; background: #f0f0f0; border-top: 2px solid #cfcfcf; border-bottom: 2px solid #333; display: flex; align-items: flex-start; padding: 20px 12px 0 13px; }
.tl-controls { display: flex; gap: 15.300px; }
.tl-track { position: relative; margin-left: 28px; margin-top: -2px; }
.tl-items { display: flex; gap: 9px; }
.tl-bracket { width: 302px; height: 8px; margin: 4px 0 0 11px; border-bottom: 2px solid #cfcfcf; background: repeating-linear-gradient(90deg, #cfcfcf 0 2px, transparent 2px 30px); }
.tl-marker { position: absolute; left: 228px; top: -6px; }
.tl-gear { margin-left: auto; }
```
